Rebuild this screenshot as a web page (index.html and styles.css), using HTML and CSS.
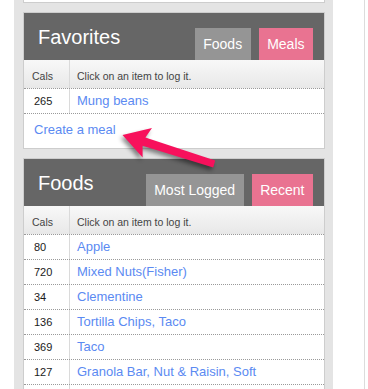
FILE: index.html
```html
<!DOCTYPE html>
<html lang="en">
<head>
<meta charset="utf-8">
<title>Log food</title>
<link rel="stylesheet" href="styles.css">
</head>
<body>
<div class="page">
  <div class="gutter"></div>
  <main class="column">
    <div class="panel stub"></div>

    <section class="panel">
      <header class="panel-head">
        <h2 class="panel-title">Favorites</h2>
        <nav class="tabs">
          <span class="tab tab-gray">Foods</span>
          <span class="tab tab-pink">Meals</span>
        </nav>
      </header>
      <div class="grid">
        <div class="row row-head"><div class="cell cal">Cals</div><div class="cell name">Click on an item to log it.</div></div>
        <div class="row"><div class="cell cal">265</div><div class="cell name"><a class="link">Mung beans</a></div></div>
      </div>
      <div class="create"><a class="link">Create a meal</a></div>
    </section>

    <section class="panel">
      <header class="panel-head">
        <h2 class="panel-title">Foods</h2>
        <nav class="tabs">
          <span class="tab tab-gray">Most Logged</span>
          <span class="tab tab-pink">Recent</span>
        </nav>
      </header>
      <div class="grid">
        <div class="row row-head"><div class="cell cal">Cals</div><div class="cell name">Click on an item to log it.</div></div>
        <div class="row"><div class="cell cal">80</div><div class="cell name"><a class="link">Apple</a></div></div>
        <div class="row"><div class="cell cal">720</div><div class="cell name"><a class="link">Mixed Nuts(Fisher)</a></div></div>
        <div class="row"><div class="cell cal">34</div><div class="cell name"><a class="link">Clementine</a></div></div>
        <div class="row"><div class="cell cal">136</div><div class="cell name"><a class="link">Tortilla Chips, Taco</a></div></div>
        <div class="row"><div class="cell cal">369</div><div class="cell name"><a class="link">Taco</a></div></div>
        <div class="row"><div class="cell cal">127</div><div class="cell name"><a class="link">Granola Bar, Nut &amp; Raisin, Soft</a></div></div>
        <div class="row"><div class="cell cal"></div><div class="cell name"></div></div>
      </div>
    </section>
  </main>
  <div class="side"></div>

  <svg class="arrow" width="368" height="389" viewBox="0 0 368 389" aria-hidden="true">
    <polygon points="122.5,135 152,128 145.4,137.6 215.2,160.6 213.2,167.4 142.6,145.8 142.6,157.5" fill="#f7115c"/>
  </svg>
</div>
</body>
</html>
```

FILE: styles.css
```css
* { box-sizing: border-box; }

html, body {
  margin: 0;
  padding: 0;
  background: #fff;
  height: 389px;
  overflow: hidden;
}

body {
  font-family: "Liberation Sans", Arial, sans-serif;
  color: #333;
}

.page {
  position: relative;
  display: flex;
  width: 368px;
  height: 389px;
  overflow: hidden;
}

.gutter {
  width: 14px;
  flex: none;
}

.column {
  width: 319px;
  flex: none;
  background: #e4e4e4;
  padding: 0 8px 0 9px;
}

.side {
  width: 32px;
  flex: none;
  border-right: 1px solid #dcdcdc;
}

.panel {
  background: #fff;
  border: 1px solid #cdcdcd;
  margin-bottom: 9px;
}

.stub {
  height: 3px;
  border-top: none;
}

.panel-head {
  height: 47px;
  background: #666;
  display: flex;
  justify-content: space-between;
  align-items: flex-end;
}

.panel-title {
  align-self: flex-start;
  margin: 0;
  padding: 12px 0 0 14px;
  font-size: 20px;
  line-height: 24px;
  font-weight: normal;
  color: #fff;
}

.tabs {
  display: flex;
  gap: 8px;
  margin-right: 11px;
}

.tab {
  height: 32px;
  line-height: 32px;
  padding: 0 8.5px;
  font-size: 14px;
  color: #fff;
}

.tab-gray { background: #959595; }
.tab-pink { background: #e97391; }

.row {
  display: grid;
  grid-template-columns: 46px 1fr;
  height: 25px;
  border-bottom: 1px dotted #9a9a9a;
}

.row-head {
  height: 29px;
  background: linear-gradient(#f8f8f8, #e8e8e8);
}

.cell {
  height: 100%;
}

.cal {
  border-right: 1px solid #dadada;
  padding-left: 10px;
  font-size: 11px;
  line-height: 24px;
  color: #1a1a1a;
}

.name {
  padding-left: 7px;
  font-size: 13px;
  line-height: 24px;
}

.row-head .cell {
  font-size: 10.5px;
  line-height: 16px;
  padding-top: 8px;
  color: #444;
}

.row-head .cal { padding-left: 8px; }

.link {
  color: #5b8af2;
  text-decoration: none;
}

.create {
  padding: 8px 10px 10px;
  font-size: 13px;
  line-height: 16px;
}

.arrow {
  position: absolute;
  left: 0;
  top: 0;
  filter: drop-shadow(-2px 3px 2px rgba(0, 0, 0, 0.45));
  pointer-events: none;
}
```
